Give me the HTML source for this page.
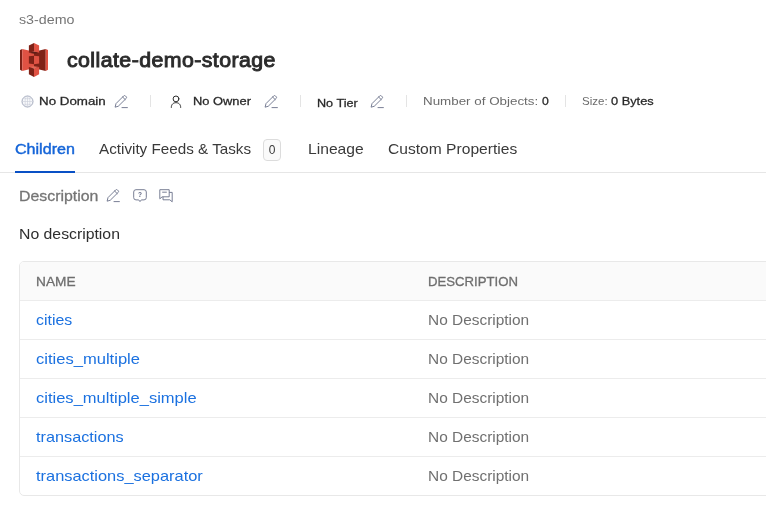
<!DOCTYPE html>
<html lang="en">
<head>
<meta charset="utf-8">
<title>collate-demo-storage</title>
<style>
*{box-sizing:border-box;margin:0;padding:0}
html,body{width:766px;height:520px;overflow:hidden;background:#fff}
body{font-family:"Liberation Sans",sans-serif;color:#292929;position:relative;-webkit-font-smoothing:antialiased}
.t{position:absolute;white-space:nowrap;line-height:1;display:inline-block}
.ico{position:absolute;display:block}
#app{position:absolute;left:0;top:0;width:766px;height:520px;overflow:hidden;will-change:transform}
a{color:#1b71e0;text-decoration:none}
/* breadcrumb */
#crumb{left:19px;top:13px;font-size:13px;color:#757575}
/* title */
#title{left:67px;top:51px;font-size:19.5px;font-weight:400;color:#2b2b2b;-webkit-text-stroke:.9px #2b2b2b}
/* meta row */
.meta{top:96px;font-size:11.5px;color:#292929;-webkit-text-stroke:.28px #292929}
.meta.l{color:#6b6b6b;-webkit-text-stroke:0}
.sep{position:absolute;top:95px;width:1px;height:12px;background:#e4e4e4}
/* tabs */
.tab{top:141px;font-size:15px;color:#3a3a3a}
#tab1{color:#1565d8;-webkit-text-stroke:.45px #1565d8}
#ink{position:absolute;left:15px;top:171px;width:60px;height:2px;background:#0950c5;z-index:2}
#tabline{position:absolute;left:0;top:172px;width:766px;height:1px;background:#e6e6e6}
#badge{position:absolute;left:263px;top:139px;width:18px;height:22px;border:1px solid #dcdcdc;border-radius:4px;background:#fafafa;font-size:12px;color:#3a3a3a;text-align:center;line-height:20.5px}
/* description */
#dlabel{left:19px;top:188px;font-size:15px;color:#757575;-webkit-text-stroke:.3px #757575}
#dtext{left:19px;top:226px;font-size:15px;color:#2e2e2e}
/* table */
#tbl{position:absolute;left:19px;top:261px;width:760px;border:1px solid #e8e8e8;border-radius:5px 0 0 5px;border-collapse:separate;border-spacing:0;overflow:hidden}
#tbl th,#tbl td{height:39px;border-bottom:1px solid #ececec;position:relative;text-align:left;font-weight:400}
#tbl th{background:#fafafa;height:39px}
#tbl tr:last-child td{border-bottom:none;height:38px}
#tbl .c1{width:392px}
.th{left:16px;top:13px;font-size:13.5px;color:#6e6e6e;-webkit-text-stroke:.3px #6e6e6e}
.td{left:16px;top:11px;font-size:15px}
.nd{color:#707070}

/* fitted horizontal scale (Poppins-like glyph widths) */
.t{transform-origin:0 50%}
#crumb{left:19px;transform:scaleX(1.096)}
#title{left:67px;letter-spacing:.4px;transform:scaleX(1.0925)}
#m1{left:39px;transform:scaleX(1.1603)}
#m2{left:193px;transform:scaleX(1.119)}
#m3{left:317px;transform:scaleX(1.0976)}
#m4{left:423px;transform:scaleX(1.163)}
#m5{left:542px;transform:scaleX(1.06)}
#m6{left:582px;transform:scaleX(1.0033)}
#m7{left:611px;transform:scaleX(1.113)}
#tab1{left:15px;transform:scaleX(1.0715)}
#tab2{left:99px;transform:scaleX(1.0155)}
#tab3{left:308px;transform:scaleX(1.043)}
#tab4{left:388px;transform:scaleX(1.0405)}
#dlabel{left:19px;transform:scaleX(1.0581)}
#dtext{left:19px;transform:scaleX(1.0527)}
#h1{left:16px;transform:scaleX(1.0132)}
#h2{left:16px;transform:scaleX(.9753)}
#r1{left:16px;transform:scaleX(1.0588)}
#r2{left:16px;transform:scaleX(1.1037)}
#r3{left:16px;transform:scaleX(1.101)}
#r4{left:16px;transform:scaleX(1.0835)}
#r5{left:16px;transform:scaleX(1.0932)}
.nd{left:16px;transform:scaleX(1.028)}
</style>
</head>
<body>
<div id="app">

<nav><a class="t" id="crumb" style="color:#757575">s3-demo</a></nav>

<svg class="ico" id="s3" style="left:20px;top:43px" width="28" height="34" viewBox="0 0 256 310" preserveAspectRatio="none">
  <path d="M20.624 53.686L0 64v181.02l20.624 10.254.124-.149V53.828l-.124-.142" fill="#7f2217"/>
  <path d="M131 229L20.624 255.274V53.686L131 79.387V229" fill="#E05243"/>
  <path d="M81.178 187.866l46.818 5.96.294-.678.263-76.77-.557-.6-46.818 5.874v66.214" fill="#7f2217"/>
  <path d="M127.996 229.295l107.371 26.035.169-.269-.003-201.195-.17-.18-107.367 25.996v149.613" fill="#7f2217"/>
  <path d="M174.827 187.866l-46.831 5.96v-78.048l46.831 5.874v66.214" fill="#E05243"/>
  <path d="M174.827 89.631l-46.831 8.535-46.818-8.535 46.759-12.256 46.89 12.256" fill="#5E1F18"/>
  <path d="M174.827 219.801l-46.831-8.59-46.818 8.59 46.761 13.053 46.888-13.053" fill="#e46a59"/>
  <path d="M81.178 89.631l46.818-11.586.379-.117V.313L127.996 0 81.178 23.413v66.218" fill="#7f2217"/>
  <path d="M174.827 89.631l-46.831-11.586V0l46.831 23.413v66.218" fill="#E05243"/>
  <path d="M127.996 309.428l-46.823-23.405v-66.217l46.823 11.582.689.783-.187 75.906-.502 1.351" fill="#7f2217"/>
  <path d="M127.996 309.428l46.827-23.405v-66.217l-46.827 11.582v78.04M235.367 53.686L256 64v181.02l-20.633 10.31V53.686" fill="#E05243"/>
</svg>

<h1 class="t" id="title">collate-demo-storage</h1>

<section id="metarow">
  <svg class="ico" id="globe" style="left:20.5px;top:95.4px" width="13" height="13" viewBox="0 0 13 13" fill="none" stroke="#c9cdd9" stroke-width="0.6">
    <circle cx="6.5" cy="6.5" r="5.5" fill="#f8f9fb" stroke="#98a0b4" stroke-width="0.9"/>
    <ellipse cx="6.5" cy="6.5" rx="2.4" ry="5.5"/>
    <line x1="1" y1="6.5" x2="12" y2="6.5"/>
    <line x1="6.5" y1="1" x2="6.5" y2="12"/>
    <line x1="1.9" y1="3.7" x2="11.1" y2="3.7"/>
    <line x1="1.9" y1="9.3" x2="11.1" y2="9.3"/>
  </svg>
  <span class="t meta" id="m1">No Domain</span>
  <svg class="ico pen" id="pen1" style="left:114.2px;top:94.9px" width="14" height="14" viewBox="0 0 14 14" fill="none" stroke="#6a7189" stroke-width="0.9" stroke-linejoin="round" stroke-linecap="round"><path d="M1.2 11.8 L2 8.6 L9.6 1 a1.3 1.3 0 0 1 1.9 0 l0.6 0.6 a1.3 1.3 0 0 1 0 1.9 L4.5 11 Z M8.6 2 L11.1 4.5"/><path d="M8 12.6 H13.4"/></svg>
  <span class="sep" style="left:150px"></span>

  <svg class="ico" id="user" style="left:170.1px;top:95.4px" width="12" height="13" viewBox="0 0 12 13" fill="none" stroke="#2b2b2b" stroke-width="1" stroke-linecap="round"><circle cx="6" cy="3.9" r="2.9"/><path d="M1.3 12.4 C1.3 9 3.6 7.7 6 7.7 C8.4 7.7 10.7 9 10.7 12.4"/></svg>
  <span class="t meta" id="m2">No Owner</span>
  <svg class="ico pen" id="pen2" style="left:264.2px;top:94.9px" width="14" height="14" viewBox="0 0 14 14" fill="none" stroke="#6a7189" stroke-width="0.9" stroke-linejoin="round" stroke-linecap="round"><path d="M1.2 11.8 L2 8.6 L9.6 1 a1.3 1.3 0 0 1 1.9 0 l0.6 0.6 a1.3 1.3 0 0 1 0 1.9 L4.5 11 Z M8.6 2 L11.1 4.5"/><path d="M8 12.6 H13.4"/></svg>
  <span class="sep" style="left:300px"></span>

  <span class="t meta" id="m3" style="top:98px">No Tier</span>
  <svg class="ico pen" id="pen3" style="left:370.4px;top:94.9px" width="14" height="14" viewBox="0 0 14 14" fill="none" stroke="#6a7189" stroke-width="0.9" stroke-linejoin="round" stroke-linecap="round"><path d="M1.2 11.8 L2 8.6 L9.6 1 a1.3 1.3 0 0 1 1.9 0 l0.6 0.6 a1.3 1.3 0 0 1 0 1.9 L4.5 11 Z M8.6 2 L11.1 4.5"/><path d="M8 12.6 H13.4"/></svg>
  <span class="sep" style="left:406px"></span>

  <span class="t meta l" id="m4">Number of Objects:</span>
  <span class="t meta" id="m5">0</span>
  <span class="sep" style="left:565px"></span>
  <span class="t meta l" id="m6">Size:</span>
  <span class="t meta" id="m7">0 Bytes</span>
</section>

<div id="tabs" role="tablist">
  <span class="t tab" id="tab1" role="tab">Children</span>
  <span class="t tab" id="tab2" role="tab">Activity Feeds &amp; Tasks</span>
  <span id="badge">0</span>
  <span class="t tab" id="tab3" role="tab">Lineage</span>
  <span class="t tab" id="tab4" role="tab">Custom Properties</span>
  <div id="ink"></div>
  <div id="tabline"></div>
</div>

<section id="desc">
  <span class="t" id="dlabel">Description</span>
  <svg class="ico pen" id="pen4" style="left:105.8px;top:188.8px" width="14" height="14" viewBox="0 0 14 14" fill="none" stroke="#6a7189" stroke-width="0.9" stroke-linejoin="round" stroke-linecap="round"><path d="M1.2 11.8 L2 8.6 L9.6 1 a1.3 1.3 0 0 1 1.9 0 l0.6 0.6 a1.3 1.3 0 0 1 0 1.9 L4.5 11 Z M8.6 2 L11.1 4.5"/><path d="M8 12.6 H13.4"/></svg>
  <svg class="ico" id="req" style="left:133px;top:189px" width="14" height="14" viewBox="0 0 14 14" fill="none" stroke="#6a7189" stroke-width="0.9" stroke-linejoin="round"><path d="M3 0.7 H11 a2.3 2.3 0 0 1 2.3 2.3 V8.6 a2.3 2.3 0 0 1 -2.3 2.3 H8.3 L7 12.6 L5.7 10.9 H3 a2.3 2.3 0 0 1 -2.3 -2.3 V3 A2.3 2.3 0 0 1 3 0.7 Z"/><text x="7" y="8.4" font-size="6.5" font-family="Liberation Sans, sans-serif" font-weight="700" text-anchor="middle" fill="#5d6480" stroke="none">?</text></svg>
  <svg class="ico" id="chat" style="left:159px;top:189px" width="14" height="14" viewBox="0 0 14 14" fill="none" stroke="#6a7189" stroke-width="0.9" stroke-linejoin="round"><path d="M0.8 0.7 H10.2 V7.8 H3.2 L0.8 9.8 Z"/><path d="M10.2 3.4 H13.2 V12.8 L10.8 10.8 H4 V7.8"/><path d="M3.2 3.2 H7.8" stroke-width="0.9"/></svg>
  <p class="t" id="dtext">No description</p>
</section>

<table id="tbl">
  <thead>
    <tr><th class="c1"><span class="t th" id="h1">NAME</span></th><th><span class="t th" id="h2">DESCRIPTION</span></th></tr>
  </thead>
  <tbody>
    <tr><td class="c1"><a class="t td" id="r1">cities</a></td><td><span class="t td nd m">No Description</span></td></tr>
    <tr><td class="c1"><a class="t td" id="r2">cities_multiple</a></td><td><span class="t td nd m">No Description</span></td></tr>
    <tr><td class="c1"><a class="t td" id="r3">cities_multiple_simple</a></td><td><span class="t td nd m">No Description</span></td></tr>
    <tr><td class="c1"><a class="t td" id="r4">transactions</a></td><td><span class="t td nd m">No Description</span></td></tr>
    <tr><td class="c1"><a class="t td" id="r5">transactions_separator</a></td><td><span class="t td nd m">No Description</span></td></tr>
  </tbody>
</table>

</div>
</body>
</html>
